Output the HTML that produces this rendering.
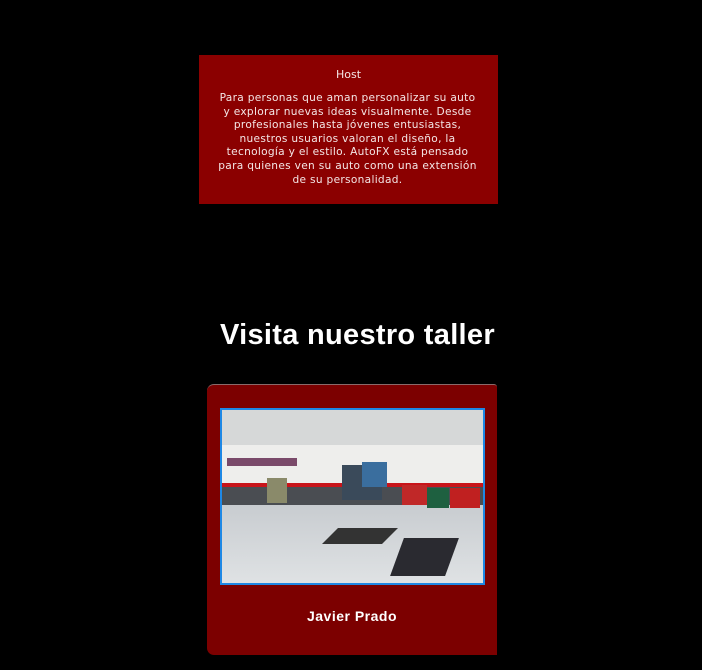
<!DOCTYPE html>
<html><head><meta charset="utf-8"><style>
html,body{margin:0;padding:0;background:#000;width:702px;height:670px;overflow:hidden;font-family:"Liberation Sans",sans-serif;}
.host{position:absolute;left:199px;top:55px;width:299px;height:149px;background:#8b0000;color:#f4e6e6;text-align:center;font-family:"DejaVu Sans",sans-serif;}
.host h4{margin:0;position:absolute;top:13px;width:100%;font-size:11px;font-weight:normal;}
.host p{margin:0;position:absolute;top:37px;left:-2px;right:0;font-size:10.6px;line-height:13.6px;letter-spacing:0.3px;white-space:nowrap;}
h2{position:absolute;left:220px;top:319px;margin:0;color:#fff;font-size:29px;letter-spacing:0.3px;font-weight:bold;white-space:nowrap;}
.card{position:absolute;left:207px;top:384px;width:290px;height:271px;background:#7c0000;border-radius:7px 3px 0 7px;border-top:1px solid #8a6a6a;box-sizing:border-box;}
.img{position:absolute;left:13px;top:23px;width:261px;height:173px;border:2px solid #1e88e5;overflow:hidden;background:#e4e6e6;}
.img div{position:absolute;}
.name{position:absolute;top:223px;width:100%;text-align:center;color:#fff;font-weight:bold;font-size:14px;letter-spacing:0.5px;}
</style></head><body>
<div class="host"><h4>Host</h4><p>Para personas que aman personalizar su auto<br>y explorar nuevas ideas visualmente. Desde<br>profesionales hasta jóvenes entusiastas,<br>nuestros usuarios valoran el diseño, la<br>tecnología y el estilo. AutoFX está pensado<br>para quienes ven su auto como una extensión<br>de su personalidad.</p></div>
<h2>Visita nuestro taller</h2>
<div class="card">
<div class="img">
<div style="left:0;top:0;width:261px;height:35px;background:#d6d8d8"></div>
<div style="left:0;top:35px;width:261px;height:40px;background:#eeeeec"></div>
<div style="left:0;top:73px;width:261px;height:4px;background:#c8141a"></div>
<div style="left:0;top:77px;width:261px;height:20px;background:#4a4d52"></div>
<div style="left:0;top:95px;width:261px;height:78px;background:linear-gradient(#c8ccd0,#dfe2e4)"></div>
<div style="left:5px;top:48px;width:70px;height:8px;background:#7a4a6a"></div>
<div style="left:45px;top:68px;width:20px;height:25px;background:#8a8a6a"></div>
<div style="left:120px;top:55px;width:40px;height:35px;background:#3a4a5a"></div>
<div style="left:140px;top:52px;width:25px;height:25px;background:#3a6e9e"></div>
<div style="left:180px;top:75px;width:25px;height:20px;background:#c02828"></div>
<div style="left:205px;top:78px;width:22px;height:20px;background:#1e6040"></div>
<div style="left:228px;top:78px;width:30px;height:20px;background:#c02020"></div>
<div style="left:108px;top:118px;width:60px;height:16px;background:#333;transform:skewX(-45deg)"></div>
<div style="left:175px;top:128px;width:55px;height:38px;background:#2a2a30;transform:skewX(-20deg)"></div>
</div>
<div class="name">Javier Prado</div>
</div>
</body></html>
